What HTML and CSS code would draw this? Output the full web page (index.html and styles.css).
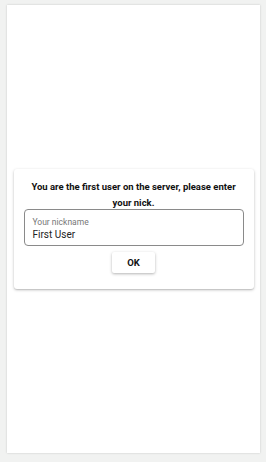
FILE: index.html
```html
<!DOCTYPE html>
<html>
<head>
<meta charset="utf-8">
<link rel="stylesheet" href="styles.css">
</head>
<body>
<div class="panel">
  <div class="card">
    <p class="msg">You are the first user on the server, please enter your nick.</p>
    <label class="field">
      <span class="field-label">Your nickname</span>
      <span class="field-value">First User</span>
    </label>
    <div class="actions">
      <button class="ok">OK</button>
    </div>
  </div>
</div>
</body>
</html>
```

FILE: styles.css
```css
html, body {
  margin: 0;
  padding: 0;
}
body {
  background: #f1f2f1;
  font-family: Roboto, "Liberation Sans", sans-serif;
  width: 266px;
  height: 462px;
  box-sizing: border-box;
  padding: 5px 6px 9px 7px;
}
.panel {
  background: #fff;
  height: 448px;
  box-shadow: 0 0 2px rgba(0,0,0,0.18);
  display: flex;
  align-items: center;
  justify-content: center;
}
.card {
  width: 240px;
  box-sizing: border-box;
  padding: 10px 10px 16px;
  background: #fff;
  border-radius: 3px;
  box-shadow: 0 1px 3px rgba(0,0,0,0.25), 0 1px 1px rgba(0,0,0,0.08);
}
.msg {
  margin: 0;
  text-align: center;
  font-size: 9.5px;
  font-weight: 700;
  line-height: 16px;
  color: #111;
}
.field {
  display: flex;
  flex-direction: column;
  margin-top: -2px;
  height: 37px;
  box-sizing: border-box;
  border: 1px solid #8a8a8a;
  border-radius: 4px;
  padding: 7px 8px 0;
}
.field-label {
  font-size: 8.5px;
  line-height: 10px;
  color: #777;
}
.field-value {
  font-size: 10px;
  line-height: 14px;
  color: #222;
  margin-top: 1px;
}
.actions {
  display: flex;
  justify-content: center;
  margin-top: 6px;
}
.ok {
  width: 43px;
  height: 21px;
  border: none;
  background: #fff;
  border-radius: 2px;
  box-shadow: 0 1px 3px rgba(0,0,0,0.3);
  font-family: Roboto, "Liberation Sans", sans-serif;
  font-weight: 700;
  font-size: 9.5px;
  color: #111;
  padding: 0;
}
```
